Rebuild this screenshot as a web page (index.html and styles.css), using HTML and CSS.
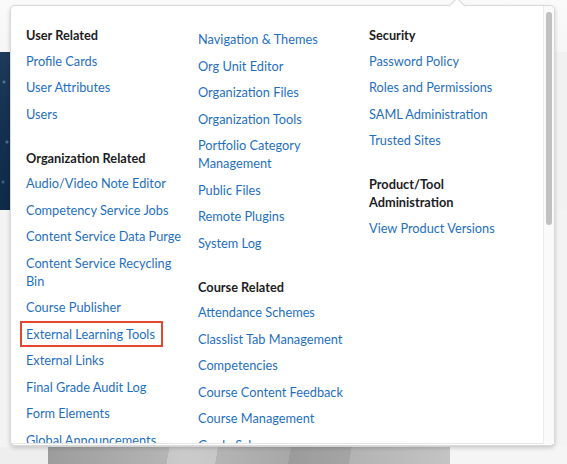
FILE: index.html
```html
<!DOCTYPE html>
<html lang="en">
<head>
<meta charset="utf-8">
<title>Admin Tools</title>
<link rel="stylesheet" href="styles.css">
</head>
<body>
<div class="page">
  <div class="page-header"></div>
  <div class="page-hero">
    <div class="hero-image"></div>
    <div class="hero-rest"></div>
  </div>
  <div class="page-body"></div>
  <div class="page-footer">
    <div class="footer-gap"></div>
    <div class="footer-image"></div>
    <div class="footer-rest"></div>
  </div>
</div>

<div class="menu">
  <div class="menu-scroll">
    <div class="menu-columns">
      <div class="menu-col">
        <section class="menu-section">
          <h3 class="menu-heading">User Related</h3>
          <ul class="menu-list">
            <li><a href="#">Profile Cards</a></li>
            <li><a href="#">User Attributes</a></li>
            <li><a href="#">Users</a></li>
          </ul>
        </section>
        <section class="menu-section">
          <h3 class="menu-heading">Organization Related</h3>
          <ul class="menu-list">
            <li><a href="#">Audio/Video Note Editor</a></li>
            <li><a href="#">Competency Service Jobs</a></li>
            <li><a href="#">Content Service Data Purge</a></li>
            <li><a href="#">Content Service Recycling Bin</a></li>
            <li><a href="#">Course Publisher</a></li>
            <li><a href="#" class="highlighted">External Learning Tools</a></li>
            <li><a href="#">External Links</a></li>
            <li><a href="#">Final Grade Audit Log</a></li>
            <li><a href="#">Form Elements</a></li>
            <li><a href="#">Global Announcements</a></li>
          </ul>
        </section>
      </div>
      <div class="menu-col menu-col-cont">
        <section class="menu-section">
          <ul class="menu-list">
            <li><a href="#">Navigation &amp; Themes</a></li>
            <li><a href="#">Org Unit Editor</a></li>
            <li><a href="#">Organization Files</a></li>
            <li><a href="#">Organization Tools</a></li>
            <li><a href="#">Portfolio Category Management</a></li>
            <li><a href="#">Public Files</a></li>
            <li><a href="#">Remote Plugins</a></li>
            <li><a href="#">System Log</a></li>
          </ul>
        </section>
        <section class="menu-section">
          <h3 class="menu-heading">Course Related</h3>
          <ul class="menu-list">
            <li><a href="#">Attendance Schemes</a></li>
            <li><a href="#">Classlist Tab Management</a></li>
            <li><a href="#">Competencies</a></li>
            <li><a href="#">Course Content Feedback</a></li>
            <li><a href="#">Course Management</a></li>
            <li><a href="#">Grade Schemes</a></li>
          </ul>
        </section>
      </div>
      <div class="menu-col">
        <section class="menu-section">
          <h3 class="menu-heading">Security</h3>
          <ul class="menu-list">
            <li><a href="#">Password Policy</a></li>
            <li><a href="#">Roles and Permissions</a></li>
            <li><a href="#">SAML Administration</a></li>
            <li><a href="#">Trusted Sites</a></li>
          </ul>
        </section>
        <section class="menu-section">
          <h3 class="menu-heading narrow">Product/Tool Administration</h3>
          <ul class="menu-list">
            <li><a href="#">View Product Versions</a></li>
          </ul>
        </section>
      </div>
    </div>
  </div>
  <div class="menu-scrollbar"><div class="menu-thumb"></div></div>
</div>
</body>
</html>
```

FILE: styles.css
```css
* { box-sizing: border-box; }

html, body {
  margin: 0;
  padding: 0;
}

body {
  width: 567px;
  height: 464px;
  overflow: hidden;
  font-family: Lato, "Open Sans", sans-serif;
  background: #f4f4f4;
}

/* ---- background page ---- */
.page {
  display: grid;
  grid-template-rows: 52px 158px 1fr 17px;
  height: 464px;
}

.page-header {
  background: linear-gradient(#fafafa, #f6f6f6);
}

.page-hero {
  display: flex;
}

.hero-image {
  width: 300px;
  background:
    radial-gradient(circle at 4px 30px, rgba(120,170,220,.5) 0 1px, transparent 2px),
    radial-gradient(circle at 7px 90px, rgba(120,170,220,.5) 0 1px, transparent 2px),
    radial-gradient(circle at 3px 130px, rgba(120,170,220,.4) 0 1px, transparent 2px),
    linear-gradient(180deg, #1d3a5a 0%, #13304f 50%, #0f2a48 100%);
}

.hero-rest {
  flex: 1;
  background: #f1f1f1;
}

.page-body {
  background: #f3f3f3;
}

.page-footer {
  display: flex;
}

.footer-gap {
  width: 48px;
  background: #eeeeee;
}

.footer-image {
  width: 402px;
  background:
    linear-gradient(100deg, transparent 0 30%, rgba(255,255,255,.25) 30% 42%, transparent 42% 60%, rgba(0,0,0,.08) 60% 75%, transparent 75%),
    linear-gradient(90deg, #9c9c9c, #b9b9b9 35%, #a8a8a8 60%, #c4c4c4);
}

.footer-rest {
  flex: 1;
  background: #f5f5f5;
}

/* ---- dropdown menu (overlay) ---- */
.menu {
  position: absolute;
  left: 10px;
  top: 5px;
  width: 545px;
  height: 441px;
  display: flex;
  background: #fff;
  border: 1px solid #d9d9d9;
  border-radius: 5px;
  box-shadow: 0 2px 4px rgba(0, 0, 0, 0.18);
  padding-bottom: 1px;
}

.menu::before {
  content: "";
  position: absolute;
  top: -6px;
  left: 440px;
  width: 11px;
  height: 11px;
  background: #fff;
  border-left: 1px solid #d9d9d9;
  border-top: 1px solid #d9d9d9;
  transform: rotate(45deg);
}

.menu-scroll {
  flex: 1;
  overflow: hidden;
  padding: 20px 0 0 15px;
  border-bottom: 1px solid #e6e6e6;
  border-radius: 5px 0 0 0;
}

.menu-columns {
  display: grid;
  grid-template-columns: 172px 171px 1fr;
}

.menu-col-cont {
  padding-top: 4px;
}

.menu-section {
  margin-bottom: 26px;
}

.menu-heading {
  margin: 0 0 7.5px;
  font-size: 12.75px;
  line-height: 18px;
  font-weight: 700;
  color: #1c1d1f;
}

.menu-heading.narrow {
  max-width: 110px;
}

.menu-list {
  list-style: none;
  margin: 0;
  padding: 0;
}

.menu-list li {
  margin: 0 0 8.5px;
  font-size: 12.75px;
  line-height: 18px;
  padding-right: 12px;
}

.menu-list a {
  color: #1f6fbf;
  text-decoration: none;
}

.menu-list a.highlighted {
  display: inline-block;
  padding: 0 4px 0 2px;
  margin-left: -2px;
  outline: 2px solid #e4462f;
  outline-offset: 2px;
}

.menu-scrollbar {
  width: 11px;
  background: #fafafa;
  border-left: 1px solid #ececec;
  border-radius: 0 5px 0 0;
  padding: 6px 2px 0 2px;
}

.menu-thumb {
  width: 6px;
  height: 213px;
  background: #c1c1c1;
  border-radius: 4px;
}
```
